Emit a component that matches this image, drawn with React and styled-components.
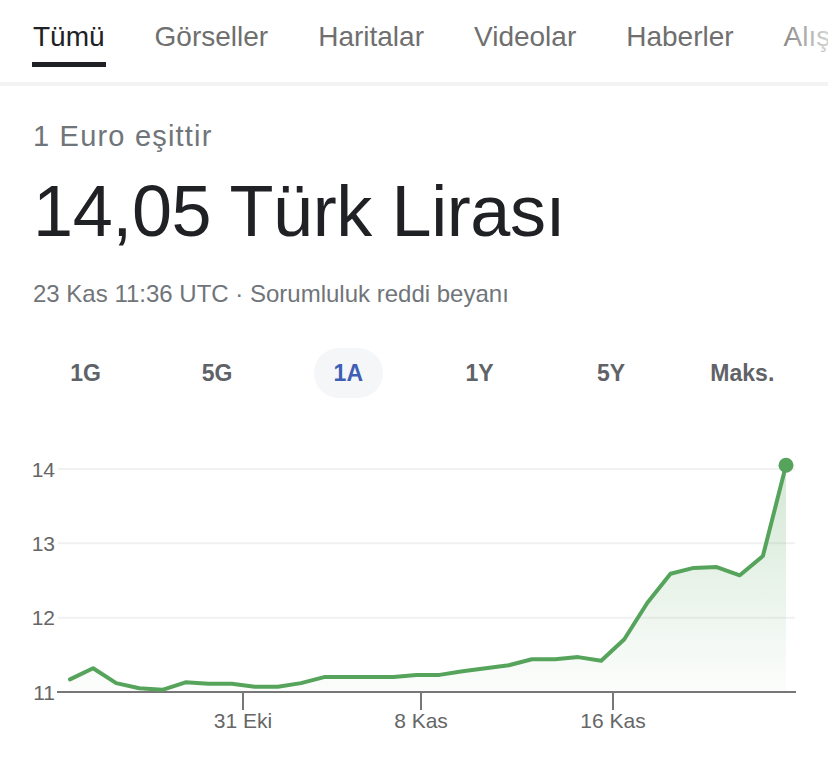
import React from "react";
import styled, { createGlobalStyle } from "styled-components";

const GlobalStyle = createGlobalStyle`
  body {
    margin: 0;
    background: #fff;
    font-family: "Liberation Sans", Arial, Helvetica, sans-serif;
    overflow: hidden;
  }
`;

const Page = styled.div`
  width: 828px;
  height: 763px;
  overflow: hidden;
`;

const TabBar = styled.nav`
  position: relative;
  display: flex;
  gap: 50px;
  height: 82px;
  padding-left: 33px;
  overflow: hidden;
  white-space: nowrap;
  border-bottom: 4px solid #f3f3f3;

  &::after {
    content: "";
    position: absolute;
    top: 0;
    right: 0;
    width: 60px;
    height: 100%;
    background: linear-gradient(to right, rgba(255, 255, 255, 0), rgba(255, 255, 255, 0.7));
  }
`;

const Tab = styled.div`
  display: flex;
  flex-direction: column;
  align-items: stretch;
  padding-top: 23px;
  font-size: 28px;
  line-height: 28px;
  color: ${(p) => (p.$active ? "#202124" : "#6f6f6f")};
`;

const TabLine = styled.div`
  height: 5px;
  margin: 11px -1px 0;
  background: ${(p) => (p.$active ? "#202124" : "transparent")};
`;

const Summary = styled.section`
  padding: 0 33px;
`;

const Subtitle = styled.div`
  margin-top: 36px;
  font-size: 29px;
  line-height: 28px;
  letter-spacing: 1.2px;
  color: #70757a;
`;

const Amount = styled.div`
  margin-top: 25px;
  font-size: 72px;
  line-height: 72px;
  letter-spacing: -0.4px;
  color: #202124;
`;

const Stamp = styled.div`
  margin-top: 35px;
  font-size: 24px;
  line-height: 24px;
  color: #70757a;
`;

const Ranges = styled.div`
  display: grid;
  grid-template-columns: repeat(6, 1fr);
  margin-top: 42px;
  padding: 0 20px;
`;

const RangeButton = styled.div`
  justify-self: center;
  display: flex;
  align-items: center;
  height: 50px;
  padding: 0 20px;
  border-radius: 25px;
  font-size: 23px;
  font-weight: 700;
  color: ${(p) => (p.$active ? "#3f5fb5" : "#5f6368")};
  background: ${(p) => (p.$active ? "#f5f6f8" : "transparent")};
`;

const ChartWrap = styled.div`
  margin-top: 22px;
  height: 343px;
`;

const tabs = ["Tümü", "Görseller", "Haritalar", "Videolar", "Haberler", "Alış"];
const ranges = ["1G", "5G", "1A", "1Y", "5Y", "Maks."];

const values = [
  11.17, 11.32, 11.12, 11.05, 11.03, 11.13, 11.11, 11.11, 11.07, 11.07, 11.12,
  11.2, 11.2, 11.2, 11.2, 11.23, 11.23, 11.28, 11.32, 11.36, 11.44, 11.44,
  11.47, 11.42, 11.71, 12.2, 12.59, 12.67, 12.68, 12.57, 12.83, 14.05,
];

const TOP = 420;
const GREEN = "#56a45c";

// page y of a value
const yOf = (v) => 692 - (v - 11) * 74.33 - TOP;
const xOf = (i) => 70 + (i * 716) / (values.length - 1);

function Chart() {
  const pts = values.map((v, i) => [xOf(i), yOf(v)]);
  const line = pts.map((p, i) => `${i ? "L" : "M"}${p[0].toFixed(1)} ${p[1].toFixed(1)}`).join(" ");
  const last = pts[pts.length - 1];
  const area = `${line} L${last[0]} ${691 - TOP} L${pts[0][0]} ${691 - TOP} Z`;
  const grid = [14, 13, 12];
  const ticks = [
    { x: 243, label: "31 Eki" },
    { x: 421, label: "8 Kas" },
    { x: 613, label: "16 Kas" },
  ];

  return (
    <svg width="828" height="343" viewBox="0 0 828 343">
      <defs>
        <linearGradient id="fade" x1="0" y1="0" x2="0" y2="1">
          <stop offset="0" stopColor={GREEN} stopOpacity="0.26" />
          <stop offset="1" stopColor={GREEN} stopOpacity="0.02" />
        </linearGradient>
      </defs>
      {grid.map((v) => (
        <line key={v} x1="58" x2="795" y1={yOf(v)} y2={yOf(v)} stroke="#f1f1f1" strokeWidth="2" />
      ))}
      {[14, 13, 12, 11].map((v) => (
        <text
          key={v}
          x="55"
          y={yOf(v) + 7.5}
          textAnchor="end"
          fontSize="21"
          fill="#666"
          fontFamily="Liberation Sans, Arial, sans-serif"
        >
          {v}
        </text>
      ))}
      <path d={area} fill="url(#fade)" />
      <line x1="57" x2="796" y1={yOf(11)} y2={yOf(11)} stroke="#777" strokeWidth="2" />
      {ticks.map((t) => (
        <g key={t.label}>
          <line x1={t.x} x2={t.x} y1={yOf(11)} y2={710 - TOP} stroke="#777" strokeWidth="2" />
          <text
            x={t.x}
            y={728 - TOP}
            textAnchor="middle"
            fontSize="21"
            fill="#666"
            fontFamily="Liberation Sans, Arial, sans-serif"
          >
            {t.label}
          </text>
        </g>
      ))}
      <path d={line} fill="none" stroke={GREEN} strokeWidth="4" strokeLinejoin="round" strokeLinecap="round" />
      <circle cx={last[0]} cy={last[1]} r="7.5" fill={GREEN} />
    </svg>
  );
}

export default function App() {
  return (
    <Page>
      <GlobalStyle />
      <TabBar>
        {tabs.map((t, i) => (
          <Tab key={t} $active={i === 0}>
            {t}
            <TabLine $active={i === 0} />
          </Tab>
        ))}
      </TabBar>
      <Summary>
        <Subtitle>1 Euro eşittir</Subtitle>
        <Amount>14,05 Türk Lirası</Amount>
        <Stamp>23 Kas 11:36 UTC · Sorumluluk reddi beyanı</Stamp>
      </Summary>
      <Ranges>
        {ranges.map((r) => (
          <RangeButton key={r} $active={r === "1A"}>
            {r}
          </RangeButton>
        ))}
      </Ranges>
      <ChartWrap>
        <Chart />
      </ChartWrap>
    </Page>
  );
}
